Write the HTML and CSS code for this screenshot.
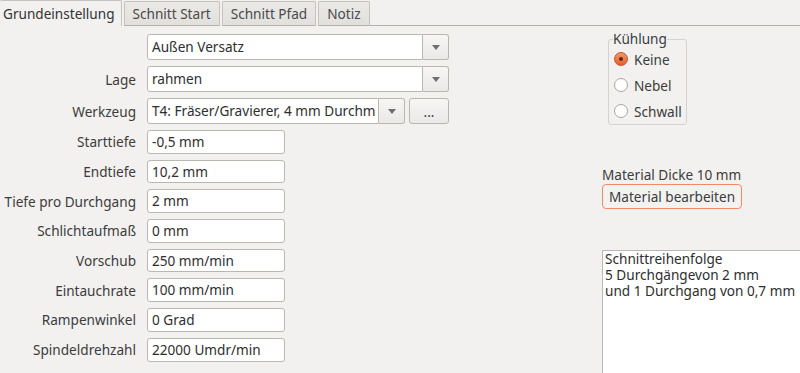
FILE: index.html
```html
<!DOCTYPE html>
<html lang="de">
<head>
  <meta charset="UTF-8">
  <title>Grundeinstellung</title>
  <link rel="stylesheet" href="styles.css">
</head>
<body>

  <div class="tabs">
    <span class="tab active">Grundeinstellung</span>
    <span class="tab">Schnitt Start</span>
    <span class="tab">Schnitt Pfad</span>
    <span class="tab">Notiz</span>
    <span class="tab-rest"></span>
  </div>

  <div class="page">
    <!-- linke Seite: Parameter -->
    <div class="form">
      <span class="label"></span>
      <div class="combo">
        <span class="combo-text">Außen Versatz</span>
        <span class="combo-btn"><i class="arrow"></i></span>
      </div>

      <span class="label">Lage</span>
      <div class="combo">
        <span class="combo-text">rahmen</span>
        <span class="combo-btn"><i class="arrow"></i></span>
      </div>

      <span class="label">Werkzeug</span>
      <div class="tool-row">
        <div class="combo tool">
          <span class="combo-text">T4: Fräser/Gravierer, 4 mm Durchm</span>
          <span class="combo-btn"><i class="arrow"></i></span>
        </div>
        <button class="dots">...</button>
      </div>

      <span class="label">Starttiefe</span>
      <div class="entry">-0,5 mm</div>
      <span class="label">Endtiefe</span>
      <div class="entry">10,2 mm</div>
      <span class="label">Tiefe pro Durchgang</span>
      <div class="entry">2 mm</div>
      <span class="label">Schlichtaufmaß</span>
      <div class="entry">0 mm</div>
      <span class="label">Vorschub</span>
      <div class="entry">250 mm/min</div>
      <span class="label">Eintauchrate</span>
      <div class="entry">100 mm/min</div>
      <span class="label">Rampenwinkel</span>
      <div class="entry">0 Grad</div>
      <span class="label">Spindeldrehzahl</span>
      <div class="entry">22000 Umdr/min</div>
    </div>

    <!-- rechte Seite -->
    <div class="side">
      <fieldset class="cooling">
        <legend>Kühlung</legend>
        <label class="radio checked"><span class="dot"></span>Keine</label>
        <label class="radio"><span class="dot"></span>Nebel</label>
        <label class="radio"><span class="dot"></span>Schwall</label>
      </fieldset>

      <div class="material">Material Dicke 10 mm</div>
      <button class="material-btn">Material bearbeiten</button>

      <div class="order">Schnittreihenfolge<br>5 Durchgängevon 2 mm<br>und 1 Durchgang von 0,7 mm</div>
    </div>
  </div>

</body>
</html>
```

FILE: styles.css
```css
body {
  margin: 0;
  width: 800px;
  height: 373px;
  overflow: hidden;
  background: #f2f1f0;
  color: #3c3c3c;
  font-family: 'Noto Sans', sans-serif;
  font-size: 13.6px;
}

.tabs {
  display: flex;
  height: 26px;
}

.tab {
  padding: 0 8px;
  line-height: 24px;
  margin: 1px 0 0 2px;
  color: #4a4a4a;
  background: linear-gradient(#ebe9e6, #e2e0dc);
  border: 1px solid #c6c2bd;
  border-bottom-color: #b5b1ab;
  border-radius: 2px 2px 0 0;
}

.tab.active {
  margin: 0;
  padding: 0 6px 0 3px;
  line-height: 25px;
  background: #f2f1f0;
  border-color: #c6c2bd;
  border-bottom: none;
  border-left: none;
  color: #333;
}

.tab-rest {
  flex: 1;
  border-bottom: 1px solid #b5b1ab;
}

.page {
  display: flex;
}

.form {
  display: grid;
  grid-template-columns: 136px 302px;
  column-gap: 11px;
  row-gap: 6px;
  grid-auto-rows: 23.7px;
  grid-template-rows: 26px 26px 26px;
  padding-top: 8px;
  align-items: center;
}

.label {
  text-align: right;
  white-space: nowrap;
}

.combo {
  display: flex;
  height: 26px;
  box-sizing: border-box;
}

.combo-text {
  flex: 1;
  background: #fff;
  border: 1px solid #bab6b0;
  border-radius: 3px 0 0 3px;
  padding: 0 4px;
  line-height: 24px;
  white-space: nowrap;
  overflow: hidden;
  color: #2e2e2e;
}

.combo-btn {
  width: 25px;
  border: 1px solid #bab6b0;
  border-left: none;
  border-radius: 0 3px 3px 0;
  background: linear-gradient(#f7f6f5, #ebe9e7);
  display: flex;
  align-items: center;
  justify-content: center;
}

.arrow {
  width: 0;
  height: 0;
  border-left: 4px solid transparent;
  border-right: 4px solid transparent;
  border-top: 5px solid #6f6f6f;
}

.tool-row {
  display: flex;
  gap: 4px;
}

.tool {
  width: 258px;
}

.dots {
  width: 40px;
  height: 26px;
  border: 1px solid #bab6b0;
  border-radius: 3px;
  background: linear-gradient(#f7f6f5, #ebe9e7);
  font: inherit;
  color: #3c3c3c;
  padding: 0;
}

.entry {
  width: 138px;
  height: 23.7px;
  box-sizing: border-box;
  background: #fff;
  border: 1px solid #bab6b0;
  border-radius: 3px;
  padding: 0 4px;
  line-height: 21px;
  color: #2e2e2e;
}

.side {
  margin-left: 153px;
  display: flex;
  flex-direction: column;
  align-items: flex-start;
  flex: 1;
}

.cooling {
  margin: 6px 0 0 6px;
  padding: 0 4px 0 5px;
  border: 1px solid #d6d3cf;
  border-radius: 3px;
  width: 79px;
  box-sizing: border-box;
}

.cooling legend {
  padding: 0;
  margin-left: -1px;
  line-height: 14px;
}

.radio {
  display: flex;
  align-items: center;
  gap: 6px;
  height: 26px;
}

.dot {
  width: 12px;
  height: 12px;
  border-radius: 50%;
  border: 1px solid #a8a5a0;
  background: #fff;
  position: relative;
}

.radio.checked .dot {
  border-color: #c2552b;
  background: linear-gradient(#f59467, #e2622f);
}

.radio.checked .dot::after {
  content: "";
  position: absolute;
  left: 4px;
  top: 4px;
  width: 4px;
  height: 4px;
  border-radius: 50%;
  background: #5a2a17;
}

.material {
  margin-top: 40px;
}

.material-btn {
  height: 25px;
  padding: 0 6px;
  font: inherit;
  color: #3c3c3c;
  background: #f3f2f1;
  border: 1px solid #ec8d63;
  border-radius: 4px;
}

.order {
  margin-top: 41px;
  align-self: stretch;
  height: 124px;
  box-sizing: border-box;
  background: #fff;
  border: 1px solid #bcb9b5;
  border-right: none;
  padding: 0 2px;
  line-height: 16px;
  color: #2e2e2e;
}
```
